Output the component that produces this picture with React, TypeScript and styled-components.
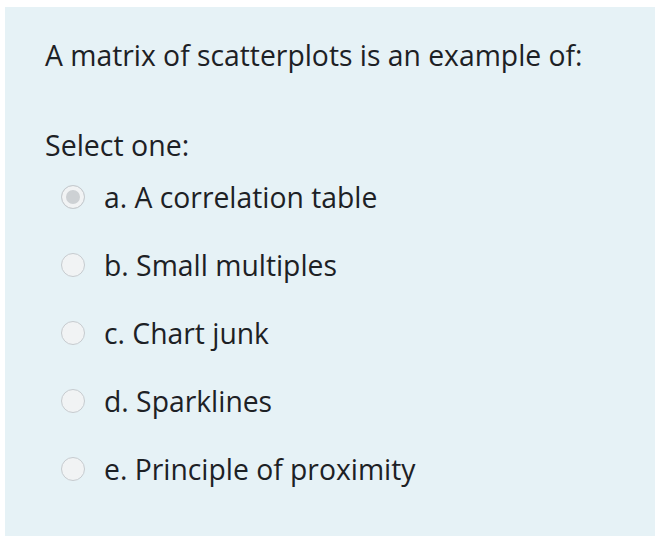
import React from 'react';
import styled, { createGlobalStyle } from 'styled-components';

const GlobalStyle = createGlobalStyle`
  body {
    margin: 0;
    background: #ffffff;
    font-family: "Open Sans", "Noto Sans", sans-serif;
    color: #1d2125;
  }
`;

const options = [
  { key: 'a', label: 'A correlation table', checked: true },
  { key: 'b', label: 'Small multiples' },
  { key: 'c', label: 'Chart junk' },
  { key: 'd', label: 'Sparklines' },
  { key: 'e', label: 'Principle of proximity' },
];

const App = () => {
  return (
    <Page>
      <GlobalStyle />
      <Panel>
        <Question>A matrix of scatterplots is an example of:</Question>
        <Prompt>Select one:</Prompt>
        <Answers>
          {options.map((o) => (
            <Option key={o.key}>
              <Radio $checked={!!o.checked} />
              <Label>
                {o.key}. {o.label}
              </Label>
            </Option>
          ))}
        </Answers>
      </Panel>
    </Page>
  );
};

export default App;

const Page = styled.div`
  width: 655px;
  height: 542px;
  padding: 7px 0 6px 5px;
  box-sizing: border-box;
`;

const Panel = styled.div`
  height: 100%;
  background-color: #e6f2f6;
  padding: 28px 0 0 40px;
  box-sizing: border-box;
`;

const Question = styled.p`
  margin: 0;
  font-size: 28.3px;
  line-height: 40px;
`;

const Prompt = styled.p`
  margin: 52px 0 0;
  font-size: 28.5px;
  line-height: 36px;
`;

const Answers = styled.div`
  display: flex;
  flex-direction: column;
`;

const Option = styled.div`
  display: flex;
  align-items: center;
  gap: 19px;
  height: 68px;
  padding-left: 16px;
`;

const Radio = styled.span<{ $checked: boolean }>`
  width: 22px;
  height: 22px;
  border-radius: 50%;
  border: 1px solid #c6cbcf;
  background: ${(p) => (p.$checked ? '#cdd1d4' : '#f1f3f4')};
  box-shadow: ${(p) => (p.$checked ? 'inset 0 0 0 4px #f1f3f4' : 'none')};
  flex-shrink: 0;
`;

const Label = styled.span`
  font-size: 28.3px;
  line-height: 36px;
`;
